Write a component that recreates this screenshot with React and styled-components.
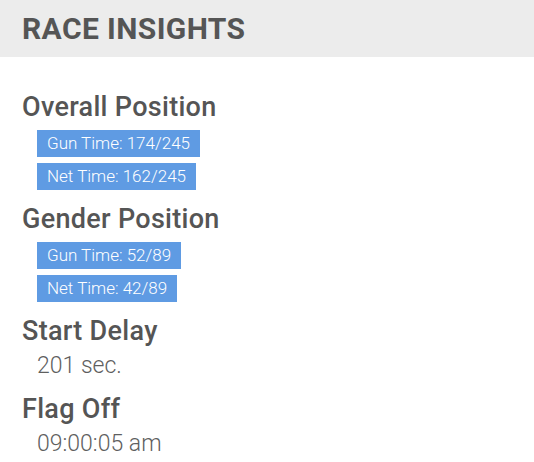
import styled, { createGlobalStyle } from 'styled-components'

const GlobalStyle = createGlobalStyle`
  body {
    margin: 0;
    background: #fff;
    font-family: Roboto, "Liberation Sans", sans-serif;
  }
`

const Panel = styled.div`
  width: 534px;
`

const Header = styled.div`
  background: #ececec;
  height: 57px;
  display: flex;
  align-items: center;
  padding: 0 22px;
  box-sizing: border-box;
`

const Title = styled.h1`
  margin: 0;
  font-size: 30px;
  font-weight: 700;
  color: #555;
  letter-spacing: 0.4px;
`

const Body = styled.div`
  padding: 34px 22px 0;
  display: flex;
  flex-direction: column;
  gap: 13px;
`

const Heading = styled.h2`
  margin: 0;
  font-size: 27px;
  font-weight: 500;
  color: #555;
  line-height: 32px;
  letter-spacing: 0.3px;
`

const BadgeList = styled.div`
  display: flex;
  flex-direction: column;
  align-items: flex-start;
  gap: 6px;
  padding: 7px 0 0 15px;
`

const Badge = styled.span`
  background: #5f9be3;
  color: #fff;
  font-weight: 300;
  font-size: 17px;
  line-height: 27px;
  padding: 0 10px;
`

const Value = styled.div`
  font-size: 23px;
  font-weight: 300;
  color: #5f5f5f;
  padding: 4px 0 0 15px;
  line-height: 29px;
`

const sections = [
  { title: 'Overall Position', badges: ['Gun Time: 174/245', 'Net Time: 162/245'] },
  { title: 'Gender Position', badges: ['Gun Time: 52/89', 'Net Time: 42/89'] },
  { title: 'Start Delay', value: '201 sec.' },
  { title: 'Flag Off', value: '09:00:05 am' },
]

export default function App() {
  return (
    <Panel>
      <GlobalStyle />
      <Header>
        <Title>RACE INSIGHTS</Title>
      </Header>
      <Body>
        {sections.map((s) => (
          <div key={s.title}>
            <Heading>{s.title}</Heading>
            {s.badges && (
              <BadgeList>
                {s.badges.map((b) => (
                  <Badge key={b}>{b}</Badge>
                ))}
              </BadgeList>
            )}
            {s.value && <Value>{s.value}</Value>}
          </div>
        ))}
      </Body>
    </Panel>
  )
}
